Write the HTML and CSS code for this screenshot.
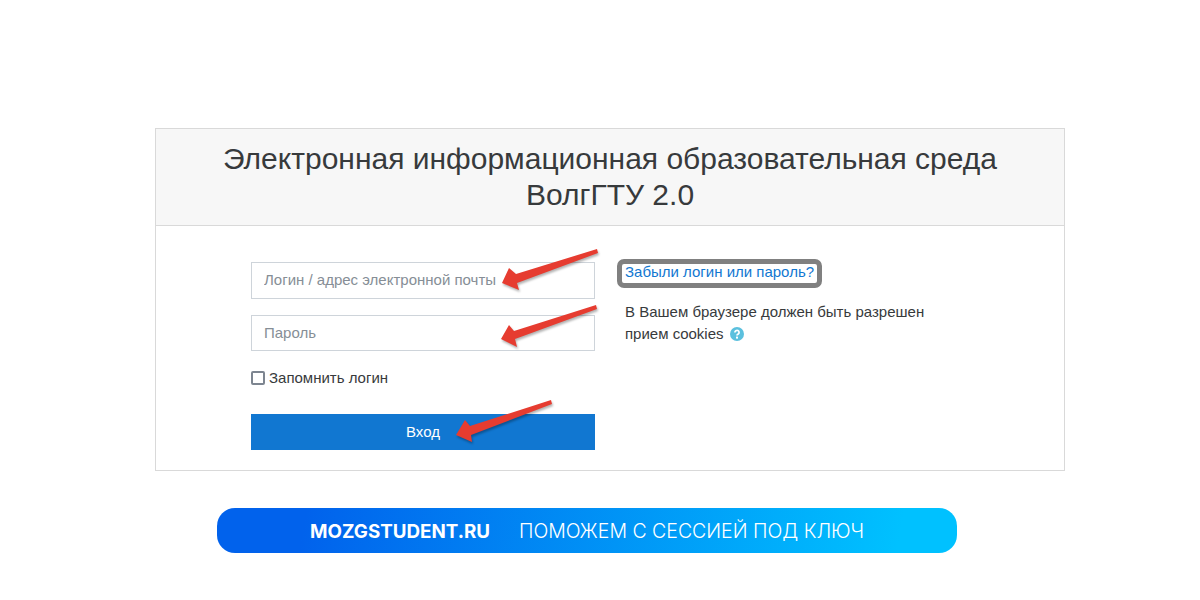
FILE: index.html
```html
<!DOCTYPE html>
<html lang="ru">
<head>
    <meta charset="UTF-8">
    <meta name="viewport" content="width=device-width, initial-scale=1.0">
    <title>Электронная информационная образовательная среда ВолгГТУ 2.0</title>
    <link rel="stylesheet" href="styles.css">
</head>
<body>

    <div class="login-card">
        <div class="card-header">
            <h1>Электронная информационная образовательная среда ВолгГТУ 2.0</h1>
        </div>
        <div class="card-body">
            <form class="login-form" onsubmit="return false">
                <input class="field field-login" type="text" placeholder="Логин / адрес электронной почты">
                <input class="field field-pass" type="password" placeholder="Пароль">
                <label class="remember"><span class="check"></span>Запомнить логин</label>
                <button class="submit" type="submit">Вход</button>
            </form>
            <div class="login-info">
                <a class="forgot" href="#">Забыли логин или пароль?</a>
                <p>В Вашем браузере должен быть разрешен прием cookies
                    <svg class="help" width="14" height="14" viewBox="0 0 14 14">
                        <circle cx="7" cy="7" r="7" fill="#5bc0de"/>
                        <path d="M4.9 5.4a2.1 2 0 1 1 3.3 1.6c-.8.5-1.2.9-1.2 1.6" fill="none" stroke="#fff" stroke-width="1.7"/>
                        <rect x="6" y="9.6" width="2" height="2" fill="#fff"/>
                    </svg>
                </p>
            </div>
        </div>
    </div>

    <div class="promo">
        <span class="promo-site">MOZGSTUDENT.RU</span>
        <span class="promo-text">ПОМОЖЕМ С СЕССИЕЙ ПОД КЛЮЧ</span>
    </div>

    <!-- red arrows drawn on top of the form -->
    <svg class="arrows" width="1200" height="600" viewBox="0 0 1200 600">
        <polygon points="597,249 598,253 517,283 519,290 502,283 509,268 516,274"/>
        <polygon points="596,305 597,309 515,339 517,347 501,339 509,325 514,331"/>
        <polygon points="551,400 552,404 471,435 472,442 456,435 465,420 470,426"/>
    </svg>

</body>
</html>
```

FILE: styles.css
```css
body { margin: 0; padding-top: 128px; position: relative; font-family: "Liberation Sans", Arial, sans-serif; font-size: 15px; line-height: 23px; color: #373a3c; background: #fff; }

.login-card { width: 908px; margin: 0 auto 0 155px; border: 1px solid #d9d9d9; }
.card-header { background: #f7f7f7; border-bottom: 1px solid #d9d9d9; padding: 12px 30px 12px; text-align: center; }
.card-header h1 { margin: 0; font-size: 30px; font-weight: 400; line-height: 36px; }

.card-body { display: flex; gap: 30px; padding: 36px 0 20px 95px; }
.login-form { display: flex; flex-direction: column; width: 344px; }
.field { box-sizing: border-box; width: 344px; border: 1px solid #ced4da; padding: 0 12px 2px; font: inherit; color: #373a3c; outline: none; }
.field::placeholder { color: #868e96; opacity: 1; }
.field-login { height: 37px; margin-bottom: 16px; }
.field-pass { height: 36px; margin-bottom: 16px; }

.remember { display: flex; align-items: center; gap: 4px; height: 21px; margin-bottom: 26px; }
.check { box-sizing: border-box; width: 14px; height: 14px; border: 2px solid #7d8590; border-radius: 2px; background: #fff; }
.submit { height: 36px; border: 0; padding: 0 0 1px; background: #1177d1; color: #fff; font: inherit; }

.login-info { width: 310px; }
.login-info p { margin: 13px 0 0; line-height: 22px; }
.forgot { display: block; width: fit-content; margin: -3px 0 0 -8px; padding: 0 3px 3px; border: 5px solid #808080; border-radius: 7px; color: #1177d1; text-decoration: none; line-height: 16px; }
.help { margin-left: 2px; vertical-align: -2px; }

.promo { display: flex; align-items: center; width: 740px; height: 45px; margin: 37px 0 0 217px; padding: 1px 0 0 93px; box-sizing: border-box; border-radius: 18px; background: linear-gradient(100deg, #0162ec 0%, #0162ec 12%, #00c1ff 92%); color: #fff; font-family: Inter, sans-serif; white-space: nowrap; }
.promo-site { width: 209px; font-size: 18.8px; font-weight: 700; }
.promo-text { font-size: 19.5px; font-weight: 300; }

.arrows { position: absolute; left: 0; top: 0; pointer-events: none; }
.arrows polygon { fill: #e63c30; filter: drop-shadow(1px 2px 1px rgba(0, 0, 0, .3)); }
```
